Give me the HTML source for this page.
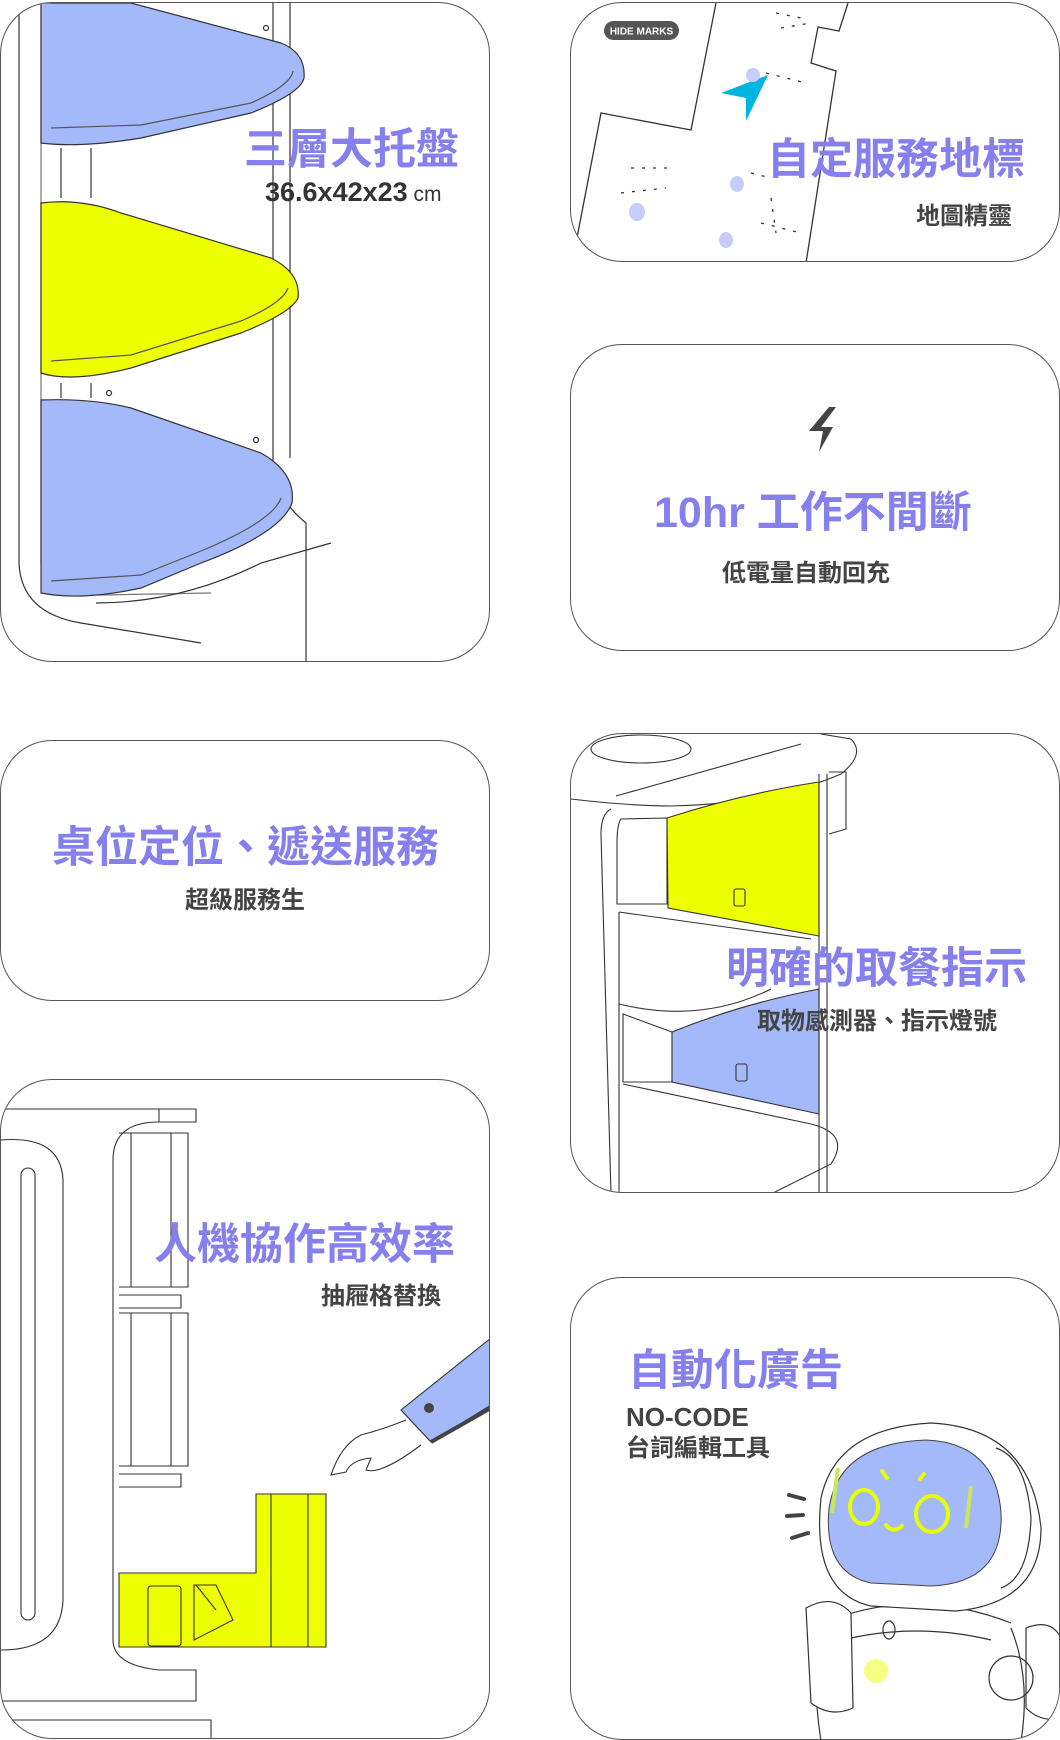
<!DOCTYPE html>
<html><head><meta charset="utf-8"><style>
*{margin:0;padding:0;box-sizing:border-box}
body{width:1060px;height:1740px;background:#fff;position:relative;overflow:hidden;font-family:"Liberation Sans","Noto Sans CJK TC",sans-serif}
.card{position:absolute;border:1.5px solid #555;border-radius:52px;overflow:hidden;background:#fff}
.card svg{position:absolute;left:0;top:0}
.t{position:absolute;font-weight:700;color:#8580ee;font-size:43px;white-space:nowrap;line-height:1;font-family:"Noto Sans CJK TC",sans-serif}
.s{position:absolute;font-weight:700;color:#444;font-size:24px;white-space:nowrap;line-height:1;font-family:"Noto Sans CJK TC",sans-serif}
</style></head><body>

<!-- Card 1 -->
<div class="card" style="left:0;top:2px;width:490px;height:660px">
<svg width="490" height="660" fill="none" stroke="#333" stroke-width="1.2">
<path d="M18 0 V560 Q20 610 80 620 L200 640" />
<path d="M40 0 V560 Q45 590 100 592 L210 590" stroke="#777"/>
<path d="M272 0 V470 Q280 500 305 520 V660" />
<path d="M289 0 V455" />
<path d="M40 0 H130 L280 40 Q305 50 303 75 Q300 90 250 110 L140 135 Q80 145 40 140 Z" fill="#a4b9f9"/>
<path d="M50 125 L140 122 L250 100 Q290 82 292 68" stroke="#555"/>
<path d="M40 200 Q80 195 120 210 L270 255 Q300 270 297 295 Q290 310 240 330 L130 365 Q70 380 40 370 Z" fill="#eeff00"/>
<path d="M50 358 L130 352 L240 318 Q282 300 287 285" stroke="#555"/>
<path d="M40 397 Q90 395 130 405 L260 450 Q295 470 291 500 Q280 530 200 560 L140 585 Q80 598 40 590 Z" fill="#a4b9f9"/>
<path d="M50 578 L140 572 L200 548 Q272 518 280 495" stroke="#555"/>
<path d="M95 600 Q180 600 260 560 L330 540" />
<path d="M60 145 V195 M90 145 V195 M60 380 V395 M90 380 V395"/>
<circle cx="265" cy="25" r="2.5"/><circle cx="108" cy="390" r="2.5"/><circle cx="255" cy="437" r="2.5"/>
</svg>
<div class="t" style="left:243px;top:122px">三層大托盤</div>
<div class="s" style="left:264px;top:176px;color:#333;font-family:'Liberation Sans',sans-serif;font-size:27px">36.6x42x23<span style="font-weight:400;font-size:21px"> cm</span></div>
</div>

<!-- Card 2 -->
<div class="card" style="left:570px;top:2px;width:490px;height:260px">
<svg width="490" height="260" fill="none" stroke="#333" stroke-width="1.3">
<path d="M145 0 L120 127 L30 110 L5 240"/>
<path d="M277 0 L268 28 L247 24 L240 60 L265 68 L235 260"/>
<g stroke-dasharray="3 8"><path d="M205 10 L230 15 M210 25 L240 20 M195 70 L235 80 M60 165 L100 165 M50 190 L95 185 M180 170 L200 175 M190 220 L230 230 M200 195 L205 230"/></g>
<path d="M150 90 L197 72 L175 118 L175 95 Z" fill="#00b4e0" stroke="none"/>
<g fill="#c7cdfb" stroke="none">
<ellipse cx="182" cy="72" rx="7" ry="7"/><ellipse cx="166" cy="181" rx="7" ry="8"/><ellipse cx="66" cy="209" rx="8" ry="9"/><ellipse cx="155" cy="237" rx="7" ry="8"/></g>
<rect x="33" y="18" width="75" height="19" rx="9.5" fill="#555" stroke="none"/>
<text x="70.5" y="31.5" fill="#fff" stroke="none" font-size="10" font-weight="700" text-anchor="middle" font-family="Liberation Sans">HIDE MARKS</text>
</svg>
<div class="t" style="left:196px;top:132px">自定服務地標</div>
<div class="s" style="left:345px;top:199px">地圖精靈</div>
</div>

<!-- Card 3 -->
<div class="card" style="left:570px;top:344px;width:490px;height:307px">
<svg width="490" height="307"><path d="M258 62 L238 86 L252 86 L248 107 L262 82 L250 82 L265 62 Z" fill="#444"/></svg>
<div class="t" style="left:83px;top:147px;font-family:'Liberation Sans','Noto Sans CJK TC',sans-serif">10hr 工作不間斷</div>
<div class="s" style="left:151px;top:214px">低電量自動回充</div>
</div>

<!-- Card 4 -->
<div class="card" style="left:0;top:740px;width:490px;height:261px">
<div class="t" style="left:51px;top:82px">桌位定位、遞送服務</div>
<div class="s" style="left:184px;top:145px">超級服務生</div>
</div>

<!-- Card 5 -->
<div class="card" style="left:570px;top:733px;width:490px;height:460px">
<svg width="490" height="460" fill="none" stroke="#333" stroke-width="1.1">
<ellipse cx="70" cy="15" rx="50" ry="14"/>
<path d="M0 65 Q60 72 100 72 Q200 70 270 40 Q295 20 280 5 L250 0"/>
<path d="M45 62 L230 10 M40 75 Q30 80 30 100 L40 460 M50 85 Q46 90 46 110 V170 H96 V84 Z M48 178 V460 M52 280 V348 H101 V298 Z"/>
<path d="M96 84 Q170 60 248 48 L248 202 L97 174 Z" fill="#eeff00"/>
<path d="M101 298 Q170 270 248 255 L248 380 L101 348 Z" fill="#a4b9f9"/>
<path d="M248 40 V460 M256 40 V460"/>
<path d="M48 178 L240 205 M48 270 Q130 290 200 255 M52 350 L240 390 Q280 400 260 430 L200 460"/>
<path d="M258 38 H275 V95 L258 100"/>
<rect x="163" y="155" width="11" height="17" rx="2"/><rect x="165" y="330" width="11" height="17" rx="2"/>
</svg>
<div class="t" style="left:155px;top:210px">明確的取餐指示</div>
<div class="s" style="left:186px;top:273px">取物感測器、指示燈號</div>
</div>

<!-- Card 6 -->
<div class="card" style="left:0;top:1079px;width:490px;height:660px">
<svg width="490" height="660" fill="none" stroke="#333" stroke-width="1.1">
<path d="M5 29 H195 V42 H158 M158 29 V42"/>
<path d="M0 60 Q60 55 62 100 V520 Q60 570 0 570"/>
<rect x="20" y="88" width="14" height="452" rx="7"/>
<path d="M158 42 Q112 42 112 80 V560 Q112 585 158 590"/>
<path d="M118 53 H187 V207 H118 M130 53 V207 M170 53 V207 M118 215 H180 V228 H118"/>
<path d="M118 233 H187 V386 H118 M130 233 V386 M170 233 V386 M118 394 H180 V407 H118"/>
<path d="M255 414 H325 V567 H118 V493 H255 Z" fill="#eeff00"/>
<path d="M270 414 V567 M307 414 V567"/>
<rect x="147" y="506" width="33" height="60" rx="3"/>
<path d="M193 505 L215 505 L232 540 L193 560 Z M195 505 L215 530"/>
<path d="M158 590 H195 V621 H0 M0 640 H210 V660"/>
<path d="M490 258 L400 330 L430 362 L490 325 Z" fill="#a4b9f9"/>
<path d="M430 362 L490 328" stroke="#444" stroke-width="4"/>
<circle cx="428" cy="328" r="5" fill="#444" stroke="none"/>
<path d="M405 340 Q380 350 360 355 Q340 365 330 395 L345 392 Q350 380 370 378 L365 390 Q380 395 420 365"/>
</svg>
<div class="t" style="left:153px;top:140px">人機協作高效率</div>
<div class="s" style="left:320px;top:202px">抽屜格替換</div>
</div>

<!-- Card 7 -->
<div class="card" style="left:570px;top:1277px;width:490px;height:463px">
<svg width="490" height="463" fill="none" stroke="#333" stroke-width="1.2">
<path d="M250 340 Q240 400 250 463 M440 350 Q460 400 450 463"/>
<path d="M265 340 Q350 310 440 345 M280 360 Q350 345 420 362"/>
<path d="M235 330 Q262 315 280 335 L282 430 Q260 440 240 425 Z" fill="#fff"/>
<path d="M455 350 Q480 340 490 360 V440 Q470 445 455 430 Z" fill="#fff"/>
<circle cx="440" cy="400" r="22"/>
<path d="M250 220 Q265 150 360 145 Q460 150 470 250 Q470 325 385 333 L300 328 Q240 315 250 220 Z" fill="#fff"/>
<path d="M258 230 Q268 165 355 162 Q425 165 430 235 Q433 305 360 308 L300 305 Q252 295 258 230 Z" fill="#a4b9f9" stroke="#444" stroke-width="1"/>
<path d="M425 170 Q455 180 460 240 Q458 300 430 310"/>
<g stroke="#e8ff00" stroke-width="4" stroke-linecap="round">
<ellipse cx="293" cy="229" rx="14" ry="17"/><ellipse cx="361" cy="236" rx="16" ry="18"/>
<path d="M311 193 L316 200 M353 196 L349 201 M315 247 Q322 256 331 248"/></g>
<path d="M267 190 L261 235 M400 208 L395 250" stroke="#cde658" stroke-width="4"/>
<g stroke="#444" stroke-width="4" stroke-linecap="round"><path d="M218 217 L233 221 M216 238 L232 237 M221 260 L237 255"/></g>
<circle cx="305" cy="393" r="12" fill="#f2ff60" stroke="none" opacity=".8"/>
<ellipse cx="318" cy="352" rx="6" ry="9"/>
</svg>
<div class="t" style="left:57px;top:68px">自動化廣告</div>
<div class="s" style="left:55px;top:126px;font-family:'Liberation Sans',sans-serif;font-size:26px">NO-CODE</div>
<div class="s" style="left:55px;top:156px">台詞編輯工具</div>
</div>

</body></html>
